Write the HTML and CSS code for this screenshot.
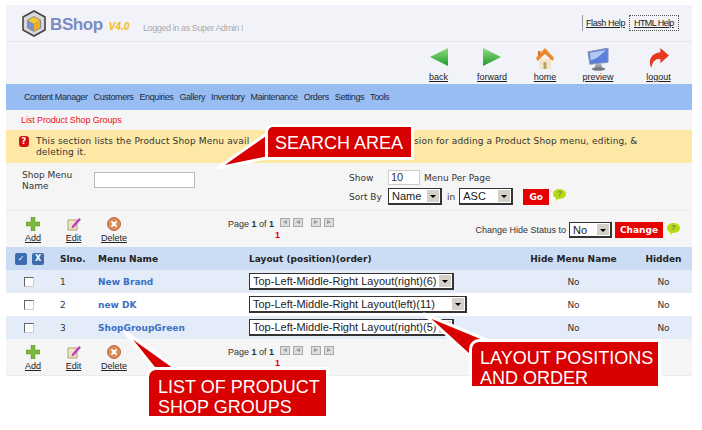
FILE: index.html
```html
<!DOCTYPE html>
<html lang="en">
<head>
  <meta charset="UTF-8">
  <title>BShop - List Product Shop Groups</title>
  <link rel="stylesheet" href="styles.css">
</head>
<body>
  <div class="panel">
    <div class="header">
      <div class="brand">
        <svg class="logo" width="24" height="27" viewBox="0 0 24 27"><path d="M12 1 23 7v13L12 26 1 20V7z" fill="#d8d8d8" stroke="#444" stroke-width="1.6"/><path d="M12 6l7 4v8l-7 4-7-4v-8z" fill="#8a8a8a"/><path d="M12 7l6 3.500-6 3.500-6-3.500z" fill="#f6c62c"/><path d="M6 11l6 3.500V21l-6-3.500z" fill="#7d8fd0"/><path d="M18 11l-6 3.500V21l6-3.500z" fill="#f2b01c"/></svg>
        <span class="brand-name">BShop</span>
        <span class="brand-ver">V4.0</span>
      </div>
      <span class="logged">Logged in as Super Admin !</span>
      <div class="help">
        <a class="help-link">Flash Help</a>
        <a class="help-link help-active">HTML Help</a>
      </div>
    </div>

    <div class="toolbar">
      <a class="tool tool-back">
        <div class="tool-icon"><svg width="18" height="18" viewBox="0 0 18 18"><defs><linearGradient id="gb" x1="0" y1="0" x2="0" y2="1"><stop offset="0" stop-color="#8fdc7f"/><stop offset="1" stop-color="#1f9a2e"/></linearGradient></defs><path d="M18 0v18L0 9z" fill="url(#gb)"/></svg></div>
        <span>back</span>
      </a>
      <a class="tool">
        <div class="tool-icon"><svg width="18" height="18" viewBox="0 0 18 18"><path d="M0 0v18l18-9z" fill="url(#gb)"/></svg></div>
        <span>forward</span>
      </a>
      <a class="tool">
        <div class="tool-icon"><svg width="20" height="22" viewBox="0 0 20 22"><path d="M4 11h12v10H4z" fill="#f3e6c8"/><path d="M8.500 14h3v7h-3z" fill="#b9a36a"/><path d="M10 0 1 10l1.500 3L10 6l7.500 7 1.500-3z" fill="#ea8a2c"/><path d="M3 3h2.500v3L3 9z" fill="#d9702a"/></svg></div>
        <span>home</span>
      </a>
      <a class="tool">
        <div class="tool-icon"><svg width="22" height="23" viewBox="0 0 23 24"><path d="M1 4 22 0v15L3 17z" fill="#5d7fdc" stroke="#8c96b8"/><path d="M3 5l17-3-9 8-7 3z" fill="#b5c8f4"/><path d="M9 17h6l1 4H8z" fill="#9a9aa6"/><ellipse cx="12" cy="22" rx="7" ry="1.800" fill="#77777f"/></svg></div>
        <span>preview</span>
      </a>
      <a class="tool">
        <div class="tool-icon"><svg width="21" height="20" viewBox="0 0 22 21"><path d="M13 0l9 8-9 8v-4.500C8 11 4.500 13.500 3.500 21 0 14 2 6 13 4.500z" fill="#e8391f"/></svg></div>
        <span>logout</span>
      </a>
    </div>

    <div class="nav">
      <a>Content Manager</a>
      <a>Customers</a>
      <a>Enquiries</a>
      <a>Gallery</a>
      <a>Inventory</a>
      <a>Maintenance</a>
      <a>Orders</a>
      <a>Settings</a>
      <a>Tools</a>
    </div>

    <div class="page-title">List Product Shop Groups</div>

    <div class="notice">
      <span class="notice-icon">?</span>
      <p><span class="notice-left">This section lists the Product Shop Menu avail</span><span>sion for adding a Product Shop menu, editing, &amp;</span><br>deleting it.</p>
    </div>

    <div class="filter">
      <label class="filter-label">Shop Menu Name</label>
      <div class="text-box"></div>
      <div class="filter-opts">
        <div class="opt-row">
          <span class="opt-label">Show</span>
          <div class="num-box">10</div>
          <span class="opt-after">Menu Per Page</span>
        </div>
        <div class="opt-row">
          <span class="opt-label">Sort By</span>
          <div class="sel sel-sort">Name<i class="sel-arrow"></i></div>
          <span class="opt-in">in</span>
          <div class="sel sel-sort">ASC<i class="sel-arrow"></i></div>
          <a class="btn btn-go">Go</a>
          <span class="bubble">?</span>
        </div>
      </div>
    </div>

    <div class="actions">
      <div class="act-icons">
        <a class="act">
          <svg width="14" height="14" viewBox="0 0 14 14"><path d="M5 0h4v5h5v4H9v5H5V9H0V5h5z" fill="#7cb83a" stroke="#5d9426" stroke-width=".5"/></svg>
          <span>Add</span>
        </a>
        <a class="act">
          <svg width="14" height="14" viewBox="0 0 14 14"><path d="M1 3h9v10H1z" fill="#efe6c8" stroke="#b0a070"/><path d="M5 9l7-8 2 1.500-7 8-2.500 1z" fill="#c040c0"/></svg>
          <span>Edit</span>
        </a>
        <a class="act">
          <svg width="14" height="14" viewBox="0 0 14 14"><circle cx="7" cy="7" r="6.500" fill="#e08a58" stroke="#b9683a"/><path d="M4.500 4.500l5 5m0-5-5 5" stroke="#fff" stroke-width="1.800"/></svg>
          <span>Delete</span>
        </a>
      </div>
      <div class="pager">
        <div class="pager-top">
          <span>Page <b>1</b> of <b>1</b></span>
          <span class="pager-btns"><i class="pg pg-left"></i><i class="pg pg-left"></i><i class="pg pg-right pg-next"></i><i class="pg pg-right"></i></span>
        </div>
        <div class="pager-num">1</div>
      </div>
      <div class="status">
        <span class="status-label">Change Hide Status to</span>
        <div class="sel sel-no">No<i class="sel-arrow"></i></div>
        <a class="btn btn-change">Change</a>
        <span class="bubble">?</span>
      </div>
    </div>

    <div class="grid">
      <div class="row row-head">
        <div class="cell cell-checks">
          <span class="head-check">&#10003;</span>
          <span class="head-check">X</span>
        </div>
        <div class="cell">Slno.</div>
        <div class="cell">Menu Name</div>
        <div class="cell">Layout (position)(order)</div>
        <div class="cell cell-mid">Hide Menu Name</div>
        <div class="cell cell-mid">Hidden</div>
      </div>
      <div class="row row-alt">
        <div class="cell cell-check"><span class="check"></span></div>
        <div class="cell">1</div>
        <div class="cell cell-name">New Brand</div>
        <div class="cell"><div class="sel sel-layout">Top-Left-Middle-Right Layout(right)(6)<i class="sel-arrow"></i></div></div>
        <div class="cell cell-mid">No</div>
        <div class="cell cell-mid">No</div>
      </div>
      <div class="row">
        <div class="cell cell-check"><span class="check"></span></div>
        <div class="cell">2</div>
        <div class="cell cell-name">new DK</div>
        <div class="cell"><div class="sel sel-layout sel-wide">Top-Left-Middle-Right Layout(left)(11)<i class="sel-arrow"></i></div></div>
        <div class="cell cell-mid">No</div>
        <div class="cell cell-mid">No</div>
      </div>
      <div class="row row-alt">
        <div class="cell cell-check"><span class="check"></span></div>
        <div class="cell">3</div>
        <div class="cell cell-name">ShopGroupGreen</div>
        <div class="cell"><div class="sel sel-layout">Top-Left-Middle-Right Layout(right)(5)<i class="sel-arrow"></i></div></div>
        <div class="cell cell-mid">No</div>
        <div class="cell cell-mid">No</div>
      </div>
    </div>

    <div class="actions actions-bottom">
      <div class="act-icons">
        <a class="act">
          <svg width="14" height="14" viewBox="0 0 14 14"><path d="M5 0h4v5h5v4H9v5H5V9H0V5h5z" fill="#7cb83a" stroke="#5d9426" stroke-width=".5"/></svg>
          <span>Add</span>
        </a>
        <a class="act">
          <svg width="14" height="14" viewBox="0 0 14 14"><path d="M1 3h9v10H1z" fill="#efe6c8" stroke="#b0a070"/><path d="M5 9l7-8 2 1.500-7 8-2.500 1z" fill="#c040c0"/></svg>
          <span>Edit</span>
        </a>
        <a class="act">
          <svg width="14" height="14" viewBox="0 0 14 14"><circle cx="7" cy="7" r="6.500" fill="#e08a58" stroke="#b9683a"/><path d="M4.500 4.500l5 5m0-5-5 5" stroke="#fff" stroke-width="1.800"/></svg>
          <span>Delete</span>
        </a>
      </div>
      <div class="pager">
        <div class="pager-top">
          <span>Page <b>1</b> of <b>1</b></span>
          <span class="pager-btns"><i class="pg pg-left"></i><i class="pg pg-left"></i><i class="pg pg-right pg-next"></i><i class="pg pg-right"></i></span>
        </div>
        <div class="pager-num">1</div>
      </div>
    </div>
  </div>

  <!-- red annotations laid over the screenshot -->
  <svg class="tails" width="702" height="430" viewBox="0 0 702 430">
    <path d="M218 168 272 130 276 156z" fill="#d80000" stroke="#fff" stroke-width="3" stroke-linejoin="round"/>
    <path d="M125 332 157 372 181 372z" fill="#d80000" stroke="#fff" stroke-width="3" stroke-linejoin="round"/>
    <path d="M424 314 470 356 487 340z" fill="#d80000" stroke="#fff" stroke-width="3" stroke-linejoin="round"/>
  </svg>
  <div class="callout callout-search">SEARCH AREA</div>
  <div class="callout callout-list">LIST OF PRODUCT<br>SHOP GROUPS</div>
  <div class="callout callout-layout">LAYOUT POSITIONS<br>AND ORDER</div>
</body>
</html>
```

FILE: styles.css
```css
:root {
  --panel-bg: #f5f5f5;
  --head-bg: #f2f3f8;
  --nav-bg: #98bdf2;
  --notice-bg: #fde8a6;
  --red: #e60000;
  --callout: #d80000;
  --text-dark: #333;
  --verdana: "DejaVu Sans", Verdana, sans-serif;
}
html, body {
  overflow: hidden;
}
body {
  font-family: "Liberation Sans", Arial, sans-serif;
  background: #fff;
  margin: 0;
  color: var(--text-dark);
  height: 430px;
}
a {
  color: inherit;
}
.panel {
  width: 686px;
  margin: 5px 0 0 6px;
  background: var(--panel-bg);
}

/* header */
.header {
  display: flex;
  align-items: center;
  height: 37px;
  background: var(--head-bg);
  border-bottom: 1px solid #e6e6ea;
  box-sizing: border-box;
  padding-left: 16px;
}
.brand {
  display: flex;
  align-items: center;
  width: 121px;
}
.logo {
  margin-right: 4px;
}
.brand-name {
  font-size: 17px;
  font-weight: bold;
  letter-spacing: -0.4px;
  color: #7c8cc2;
  margin-top: 4px;
}
.brand-ver {
  font-size: 10px;
  font-weight: bold;
  font-style: italic;
  color: #f4b81c;
  margin: 7px 0 0 6px;
}
.logged {
  font-size: 9px;
  letter-spacing: -0.4px;
  color: #aaa;
  margin-top: 9px;
}
.help {
  margin-left: auto;
  display: flex;
  align-items: center;
  font-size: 9px;
  margin-right: 13px;
  border-left: 1px solid #999;
}
.help-link {
  text-decoration: underline;
  padding: 2px 0 2px 3px;
  letter-spacing: -0.4px;
  color: #222;
}
.help-active {
  border: 1px dotted #555;
  margin-left: 4px;
  padding: 2px 4px;
  width: 40px;
  letter-spacing: -0.6px;
  white-space: nowrap;
}

/* toolbar */
.toolbar {
  height: 42px;
  box-sizing: border-box;
  padding-top: 6px;
  background: var(--head-bg);
  display: grid;
  grid-template-columns: 406px 53px 54px 52px 54px 1fr;
  align-items: start;
}
.tool {
  display: flex;
  flex-direction: column;
  align-items: center;
  font-size: 9px;
  text-decoration: underline;
  color: #222;
}
.tool-icon {
  height: 23px;
  margin-bottom: 1px;
}
.tool-back {
  grid-column: 2;
}

/* nav */
.nav {
  display: flex;
  align-items: center;
  gap: 6px;
  height: 26px;
  padding-left: 18px;
  background: var(--nav-bg);
  font-size: 9px;
  letter-spacing: -0.4px;
  color: #1c2a40;
}
.page-title {
  height: 20px;
  line-height: 20px;
  padding-left: 15px;
  font-size: 9px;
  letter-spacing: -0.1px;
  color: #f01020;
}

/* notice */
.notice {
  display: flex;
  height: 33px;
  box-sizing: border-box;
  padding: 6px 0 0 13px;
  background: var(--notice-bg);
  font-family: var(--verdana);
  font-size: 9px;
  line-height: 11px;
  letter-spacing: 0.15px;
}
.notice p {
  margin: 0 0 0 7px;
  white-space: nowrap;
}
.notice-left {
  display: inline-block;
  width: 378px;
  vertical-align: top;
}
.notice-icon {
  flex: none;
  width: 10px;
  height: 11px;
  background: #d81010;
  border-radius: 3px;
  color: #fff;
  font-size: 8px;
  font-weight: bold;
  text-align: center;
  line-height: 11px;
}

/* filter */
.filter {
  display: flex;
  height: 48px;
  box-sizing: border-box;
  border-bottom: 1px solid #ebebeb;
  font-family: var(--verdana);
  font-size: 9px;
}
.filter-label {
  width: 60px;
  margin: 7px 12px 0 16px;
  line-height: 11px;
}
.text-box {
  width: 101px;
  height: 16px;
  box-sizing: border-box;
  margin-top: 9px;
  background: #fff;
  border: 1px solid #bbb;
}
.filter-opts {
  margin: 7px 0 0 154px;
  display: flex;
  flex-direction: column;
  gap: 3px;
}
.opt-row {
  display: flex;
  align-items: center;
}
.opt-label {
  width: 39px;
}
.num-box {
  width: 32px;
  height: 15px;
  box-sizing: border-box;
  padding-left: 2px;
  background: #fff;
  border: 1px solid #ccc;
  font-family: "Liberation Sans", sans-serif;
  font-size: 11px;
  line-height: 13px;
}
.opt-after {
  margin-left: 4px;
}
.opt-in {
  margin: 0 4px 0 5px;
}

/* fake select */
.sel {
  position: relative;
  box-sizing: border-box;
  background: #fff;
  border: 1px solid #333;
  border-right-width: 2px;
  border-bottom-width: 2px;
  font-family: "Liberation Sans", Arial, sans-serif;
  font-size: 11px;
  line-height: 14px;
  padding-left: 3px;
  color: #222;
  white-space: nowrap;
  overflow: hidden;
}
.sel-arrow {
  position: absolute;
  top: 1px;
  right: 1px;
  bottom: 1px;
  width: 12px;
  background: #d4d0c8;
}
.sel-arrow::after {
  content: "";
  position: absolute;
  left: 3px;
  top: 5px;
  border: 3px solid transparent;
  border-top: 3px solid #000;
  border-bottom: 0;
}
.sel-sort {
  width: 54px;
  height: 17px;
}
.sel-no {
  width: 43px;
  height: 16px;
  margin: 0 3px;
}
.sel-layout {
  width: 205px;
  height: 17px;
}
.sel-wide {
  width: 218px;
}

.btn {
  background: var(--red);
  color: #fff;
  font-family: var(--verdana);
  font-weight: bold;
  font-size: 9px;
  text-align: center;
  height: 16px;
  line-height: 16px;
}
.btn-go {
  width: 26px;
  margin-left: 10px;
}
.btn-change {
  width: 48px;
}
.bubble {
  position: relative;
  width: 13px;
  height: 10px;
  margin: -5px 0 0 4px;
  background: #b4dc10;
  border-radius: 50%;
  color: #777;
  font-family: "Liberation Sans", sans-serif;
  font-size: 8px;
  font-weight: bold;
  line-height: 10px;
  text-align: center;
}
.bubble::after {
  content: "";
  position: absolute;
  left: 3px;
  top: 8px;
  border-top: 4px solid #b4dc10;
  border-right: 4px solid transparent;
}

/* add / edit / delete row */
.actions {
  display: flex;
  height: 36px;
}
.act-icons {
  display: grid;
  grid-template-columns: 40px 41px 40px;
  margin-left: 7px;
  width: 215px;
}
.act {
  display: flex;
  flex-direction: column;
  align-items: center;
  gap: 2px;
  padding-top: 6px;
  font-size: 9px;
  text-decoration: underline;
  color: #222;
}
.pager {
  font-size: 9px;
  width: 120px;
  padding-top: 8px;
  color: #333;
}
.pager-top {
  display: flex;
  align-items: center;
  gap: 6px;
}
.pager-btns {
  display: flex;
  gap: 3px;
  margin-top: -3px;
}
.pg {
  width: 10px;
  height: 9px;
  box-sizing: border-box;
  background: #dcdcdc;
  border: 1px solid #aaa;
  position: relative;
}
.pg::after {
  content: "";
  position: absolute;
  top: 1px;
  left: 2px;
  border-top: 2.500px solid transparent;
  border-bottom: 2.500px solid transparent;
}
.pg-left::after {
  border-right: 4px solid #999;
}
.pg-right::after {
  border-left: 4px solid #999;
}
.pg-next {
  margin-left: 5px;
}
.pager-num {
  color: var(--red);
  font-weight: bold;
  margin: 1px 0 0 47px;
}
.status {
  margin-left: auto;
  display: flex;
  align-items: center;
  font-size: 9px;
  margin-right: 12px;
  padding-top: 11px;
  height: 16px;
}

/* table */
.row {
  display: grid;
  grid-template-columns: 54px 38px 151px 263px 123px 57px;
  align-items: center;
  height: 23px;
  background: #fff;
  font-family: var(--verdana);
  font-size: 9px;
}
.row-head {
  background: #ccdcf4;
  font-weight: bold;
  color: #222;
}
.row-alt {
  background: #e4ecfa;
}
.cell-mid {
  text-align: center;
}
.cell-checks {
  display: flex;
  gap: 5px;
  padding-left: 9px;
}
.head-check {
  width: 12px;
  height: 12px;
  background: #3c6cb0;
  border-radius: 2px;
  color: #fff;
  font-size: 8px;
  line-height: 12px;
  text-align: center;
}
.cell-check {
  padding-left: 18px;
}
.check {
  display: block;
  width: 10px;
  height: 10px;
  box-sizing: border-box;
  background: #fff;
  border: 1px solid #666;
  border-right-color: #ccc;
  border-bottom-color: #ccc;
}
.cell-name {
  color: #3a70c4;
  font-weight: bold;
}
.actions-bottom {
  border-bottom: 1px solid #ebebeb;
}

/* annotations */
.tails {
  position: absolute;
  left: 0;
  top: 0;
  pointer-events: none;
}
.callout {
  position: absolute;
  background: var(--callout);
  color: #fff;
  border: 3px solid #fff;
  font-size: 18px;
  line-height: 20px;
  border-top-left-radius: 8px;
}
.callout-search {
  left: 265px;
  top: 124px;
  width: 136px;
  height: 20px;
  padding: 6px 0 4px 7px;
}
.callout-list {
  left: 146px;
  top: 367px;
  width: 168px;
  height: 39px;
  padding: 7px 0 0 9px;
  border-bottom: 0;
  border-top-left-radius: 10px;
}
.callout-layout {
  left: 469px;
  top: 339px;
  width: 178px;
  height: 38px;
  padding: 6px 0 0 8px;
  border-bottom: 0;
  border-top-left-radius: 10px;
}
```
